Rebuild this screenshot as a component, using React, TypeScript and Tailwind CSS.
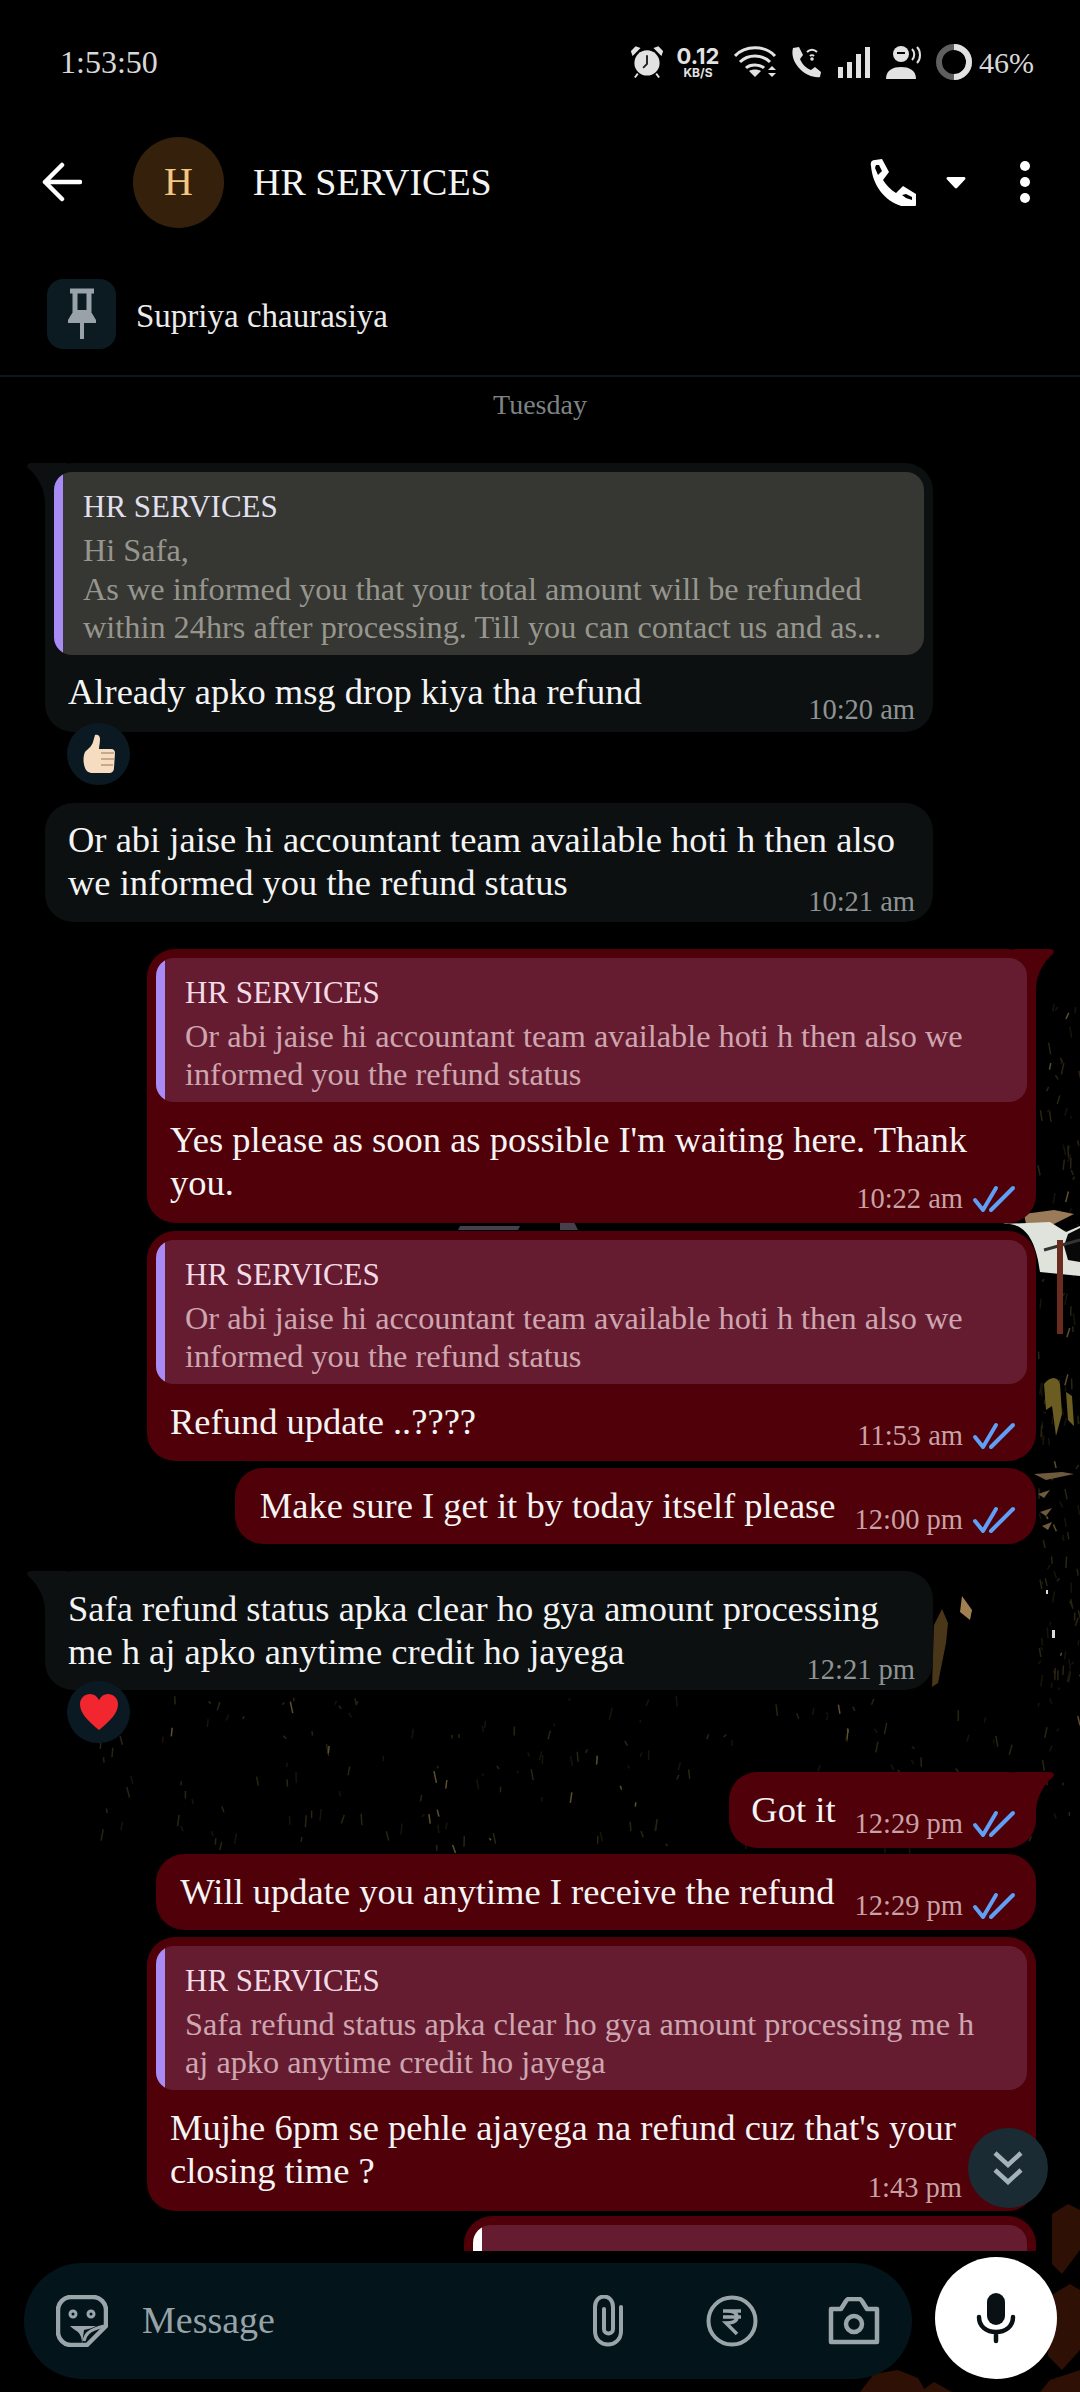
import { ReactNode } from "react";

const serif = "font-['Liberation_Serif',serif]";

const Ticks = () => (
  <svg width="44" height="28" viewBox="0 0 44 28" fill="none" stroke="#5f9ff5" strokeWidth="4" strokeLinecap="round" strokeLinejoin="round">
    <path d="M3 15l8 10L24 3" />
    <path d="M19 25L41 3" />
  </svg>
);

const Quote = ({ lines, out = false }: { lines: string[]; out?: boolean }) => (
  <div className={`rounded-[18px] overflow-hidden flex ${out ? "bg-[#661c30]" : "bg-[#363632]"}`}>
    <div className="w-[9px] shrink-0 bg-[#a88bf5]" />
    <div className="pl-[20px] pr-[6px] pt-[15px] pb-[8px]">
      <p className={`text-[31px] leading-[39px] mb-[5px] ${out ? "text-[#f3dbe6]" : "text-[#e2e0ee]"}`}>HR SERVICES</p>
      {lines.map((l) => (
        <p key={l} className={`text-[32.300px] leading-[38.500px] whitespace-nowrap ${out ? "text-[#cda6b0]" : "text-[#96968f]"}`}>
          {l}
        </p>
      ))}
    </div>
  </div>
);

const Meta = ({ time, out = false }: { time: string; out?: boolean }) => (
  <div className="flex items-center gap-[9px] shrink-0">
    <span className={`text-[28.500px] leading-[30px] ${out ? "text-[#c9a2a6]" : "text-[#8f9393]"}`}>{time}</span>
    {out && <Ticks />}
  </div>
);

const TailIn = () => (
  <svg className="absolute -left-[18px] top-0" width="40" height="40" viewBox="0 0 40 40">
    <path d="M18 40C18 26 10 12 1 5C-1 2 1 0 4 0H40V40Z" fill="#0c1011" />
  </svg>
);

const TailOut = () => (
  <svg className="absolute -right-[18px] top-0" width="40" height="40" viewBox="0 0 40 40">
    <path d="M22 40C22 26 30 12 39 5C41 2 39 0 36 0H0V40Z" fill="#4f0008" />
  </svg>
);

const Reaction = ({ children }: { children: ReactNode }) => (
  <div className="relative z-10 -mt-[9px] ml-[67px] w-[63px] h-[62px] shrink-0 rounded-full bg-[#0b1a22] flex items-center justify-center">
    {children}
  </div>
);

const Incoming = ({ children, tail = false }: { children: ReactNode; tail?: boolean }) => (
  <div className="relative shrink-0 ml-[45px] w-[888px] bg-[#0c1011] rounded-[28px]">
    {tail && <TailIn />}
    <div className="relative">{children}</div>
  </div>
);

const Outgoing = ({ children, tail = false, width }: { children: ReactNode; tail?: boolean; width: string }) => (
  <div className={`relative shrink-0 self-end mr-[44px] bg-[#4f0008] rounded-[28px] ${width}`}>
    {tail && <TailOut />}
    <div className="relative">{children}</div>
  </div>
);

// faint speckles of the wallpaper
const specks: { x: number; y: number; dx: number; dy: number; c: string }[] = [];
let seed = 17;
const rnd = () => {
  seed = (seed * 16807) % 2147483647;
  return seed / 2147483647;
};
for (let i = 0; i < 320; i++) {
  const inStrip = i < 130;
  specks.push({
    x: inStrip ? 1038 + rnd() * 42 : 100 + rnd() * 1000,
    y: inStrip ? 1000 + rnd() * 700 : 1695 + rnd() * 150,
    dx: (rnd() - 0.5) * 6,
    dy: 2 + rnd() * 10,
    c: rnd() > 0.9 ? "#5c4f2e" : rnd() > 0.5 ? "#2a2412" : "#17140a",
  });
}

const Wallpaper = () => (
  <svg className="absolute inset-0" width="1080" height="2392" viewBox="0 0 1080 2392">
    {specks.map((s, i) => (
      <path key={i} d={`M${s.x} ${s.y}l${s.dx} ${s.dy}`} stroke={s.c} strokeWidth="1.500" />
    ))}
    <path d="M1024 1214l30-4 20 4-24 12-24-2Z" fill="#9a7a58" />
    <path d="M1003 1224C1025 1222 1036 1240 1040 1272L1080 1276V1226L1066 1232 1050 1222Z" fill="#dfe3dc" />
    <path d="M1068 1234l12-6v34l-12-2-4-14Z" fill="#080808" />
    <path d="M1044 1250l36-10" stroke="#333" strokeWidth="3" />
    <path d="M1060 1240v94" stroke="#6b2c20" strokeWidth="6" />
    <path d="M1044 1384c6-8 14-8 16 0l2 30-6 22-4-30-6 4ZM1066 1392l6 4 2 30-6-6Z" fill="#6b5c22" />
    <path d="M1034 1474l28-2 12 2-28 6ZM1038 1494l12-4-6 8ZM1040 1512l12-4-6 8ZM1042 1526l10-4-4 8Z" fill="#6e5a3c" />
    <path d="M934 1625l8-16 6 14-2 20-8 40-6 4Z" fill="#4a3618" />
    <path d="M962 1596l10 14-2 10-10-8Z" fill="#a08050" />
    <path d="M1052 1630h3v8h-3ZM1046 1590h2v4h-2Z" fill="#ddd" />
    <path d="M1052 2214l16-10 12 6v40l-18 24-10-10ZM1050 2296l20-12 10 6v60l-18 20-14-14ZM860 2392l14-18 24-4 20 8 8 14ZM920 2392l14-10 18 10ZM1040 2392l10-12 30-10v22Z" fill="#2e1005" />
    <path d="M460 1226h60l-2 4h-60ZM560 1222h14l4 8h-18Z" fill="#44404c" />
  </svg>
);

export default function App() {
  return (
    <div className={`${serif} relative w-[1080px] h-[2392px] bg-black text-[#f4f4f4] overflow-hidden`}>
      <Wallpaper />

      {/* status bar */}
      <div className="relative h-[124px] flex items-center justify-between pl-[60px] pr-[46px]">
        <span className="text-[32px] text-[#d8d8d8]">1:53:50</span>
        <div className="flex items-center text-[#e2e2e2]">
          <svg width="32" height="34" viewBox="0 0 33 34" fill="#e2e2e2">
            <circle cx="16.5" cy="18" r="13" />
            <path d="M16.500 10v9l-4 4" stroke="#222" strokeWidth="2" fill="none" />
            <path d="M2 9l6-6-3-1-4 4ZM31 9l-6-6 3-1 4 4ZM7 29l-3 4M26 29l3 4" stroke="#e2e2e2" strokeWidth="2" />
          </svg>
          <div className="ml-[13px] w-[44px] flex flex-col items-center font-['Inter',sans-serif] font-bold">
            <span className="text-[22px] leading-[21px]">0.12</span>
            <span className="text-[12px] leading-[12px]">KB/S</span>
          </div>
          <svg className="ml-[14px]" width="44" height="32" viewBox="0 0 44 32" fill="none" stroke="#e2e2e2" strokeWidth="3">
            <path d="M1 10C11-1 31-1 41 10M6 16c8-8 22-8 30 0M12 22c4-4 14-4 18 0" />
            <path d="M21 31l-6-6c3-2 9-2 12 0Z" fill="#e2e2e2" stroke="none" />
            <path d="M38 20l4 4h-8ZM38 31l4-4h-8Z" fill="#e2e2e2" stroke="none" />
          </svg>
          <svg className="ml-[13px]" width="30" height="32" viewBox="0 0 30 32" fill="none">
            <path d="M2 2l6-1 4 8-3 4c2 5 6 9 11 11l4-3 6 5-1 5C15 33-2 17 2 2Z" fill="#e2e2e2" />
            <path d="M16 6c3-3 7-3 10 0M19 10c1-1 3-1 4 0" stroke="#e2e2e2" strokeWidth="2" />
            <circle cx="21" cy="13" r="1.800" fill="#e2e2e2" />
          </svg>
          <div className="ml-[17px] flex items-end gap-[4px] h-[31px]">
            <div className="w-[5px] h-[11px] bg-[#e2e2e2]" />
            <div className="w-[5px] h-[16px] bg-[#e2e2e2]" />
            <div className="w-[5px] h-[24px] bg-[#e2e2e2]" />
            <div className="w-[5px] h-[31px] bg-[#e2e2e2]" />
          </div>
          <svg className="ml-[16px]" width="36" height="33" viewBox="0 0 36 33" fill="#e2e2e2">
            <ellipse cx="15" cy="8" rx="8" ry="8" />
            <path d="M11 7h8" stroke="#000" strokeWidth="2" />
            <path d="M0 33c0-9 7-12 15-12s15 3 15 12Z" />
            <path d="M26 3c3 3 3 8 0 11M31 1c4 4 4 12 0 16" stroke="#e2e2e2" strokeWidth="2" fill="none" />
          </svg>
          <svg className="ml-[14px]" width="36" height="36" viewBox="0 0 36 36" fill="none" strokeWidth="6">
            <circle cx="18" cy="18" r="15" stroke="#5f5f5f" />
            <path d="M18 3a15 15 0 0 1 0 30" stroke="#e2e2e2" />
          </svg>
          <span className="ml-[7px] text-[30px] text-[#d8d8d8]">46%</span>
        </div>
      </div>

      {/* header */}
      <div className="relative h-[116px] flex items-center pl-[42px] pr-[50px]">
        <svg width="40" height="40" viewBox="0 0 40 40" fill="none" stroke="#fff" strokeWidth="4.500" strokeLinecap="round" strokeLinejoin="round">
          <path d="M20 3L3 20l17 17M3 20h35" />
        </svg>
        <div className="ml-[51px] w-[91px] h-[91px] rounded-full bg-[#35200c] flex items-center justify-center text-[40px] text-[#f4c77f]">
          H
        </div>
        <span className="ml-[29px] text-[38px] text-[#f4f4f4]">HR SERVICES</span>
        <div className="ml-auto flex items-center">
          <svg width="47" height="47" viewBox="0 0 47 47" fill="#fff" fillRule="evenodd">
            <path d="M2 7C1 3 3 1 6 1l7-1 7 13-6 8c3 5 8 10 13 13l7-7 13 8v10c0 3-2 4-5 4C20 47 4 30 2 7ZM7 6l-1 3 3 7 4-4-3-6ZM33 36l4 3 6 2v-3l-6-3Z" />
          </svg>
          <svg className="ml-[30px]" width="20" height="13" viewBox="0 0 20 13" fill="#fff">
            <path d="M2 1h16c1.500 0 2 1.500 1 2.500L11 12c-.6.6-1.400.6-2 0L1 3.500C0 2.500.500 1 2 1Z" />
          </svg>
          <div className="ml-[54px] flex flex-col gap-[6px]">
            <div className="w-[10px] h-[10px] rounded-full bg-white" />
            <div className="w-[10px] h-[10px] rounded-full bg-white" />
            <div className="w-[10px] h-[10px] rounded-full bg-white" />
          </div>
        </div>
      </div>

      {/* pinned message */}
      <div className="relative mt-[39px] h-[98px] flex items-start pl-[47px] border-b-2 border-[#0e161d]">
        <div className="w-[69px] h-[70px] rounded-[16px] bg-[#0c1a22] flex items-center justify-center">
          <svg width="30" height="52" viewBox="0 0 30 52" fill="none" stroke="#98a2a8" strokeWidth="5">
            <path d="M3 3h24M8 3v21M22 3v21" />
            <path d="M7 22h16l6 10v3H1v-3Z" fill="#98a2a8" stroke="none" />
            <path d="M15 35v16" strokeWidth="4" />
          </svg>
        </div>
        <span className="ml-[20px] mt-[17px] text-[33px] leading-[40px] text-[#ececec]">Supriya chaurasiya</span>
      </div>

      <div className="relative text-center text-[28px] leading-[32px] mt-[12px] text-[#7d8285]">Tuesday</div>

      {/* messages */}
      <div className="relative h-[1831px] mt-[-1px] pt-[43px] flex flex-col overflow-hidden">
        <Incoming tail>
          <div className="p-[9px] pb-0">
            <Quote
              lines={[
                "Hi Safa,",
                "As we informed you that your total amount will be refunded",
                "within 24hrs after processing. Till you can contact us and as...",
              ]}
            />
          </div>
          <p className="pl-[23px] pt-[15px] text-[36.500px] leading-[43px]">Already apko msg drop kiya tha refund</p>
          <div className="flex justify-end pr-[18px] -mt-[18px] pb-[7px]">
            <Meta time="10:20 am" />
          </div>
        </Incoming>
        <Reaction>
          <svg width="36" height="40" viewBox="0 0 36 40">
            <path d="M14 1c3-1 5 1 5 4 0 4-1 7-1 10h12c3 0 4 2 4 4l-1 15c0 3-2 5-5 5H12c-4 0-7-2-8-5-2-5-2-12 0-16 3-3 7-6 8-10Z" fill="#f6dcc0" />
            <path d="M20 19h13M20 25h13M20 31h12" stroke="#c9a98c" strokeWidth="2" />
          </svg>
        </Reaction>

        <div className="h-[18px] shrink-0" />
        <Incoming>
          <p className="pl-[23px] pt-[15px] text-[36.500px] leading-[43px]">
            Or abi jaise hi accountant team available hoti h then also
            <br />
            we informed you the refund status
          </p>
          <div className="flex justify-end pr-[18px] -mt-[17px] pb-[5px]">
            <Meta time="10:21 am" />
          </div>
        </Incoming>

        <div className="h-[27px] shrink-0" />
        <Outgoing tail width="w-[889px]">
          <div className="p-[9px] pb-0">
            <Quote
              out
              lines={["Or abi jaise hi accountant team available hoti h then also we", "informed you the refund status"]}
            />
          </div>
          <p className="pl-[23px] pt-[16px] text-[36.500px] leading-[43px]">
            Yes please as soon as possible I'm waiting here. Thank
            <br />
            you.
          </p>
          <div className="flex justify-end pr-[20px] -mt-[20px] pb-[9px]">
            <Meta time="10:22 am" out />
          </div>
        </Outgoing>

        <div className="h-[8px] shrink-0" />
        <Outgoing width="w-[889px]">
          <div className="p-[9px] pb-0">
            <Quote
              out
              lines={["Or abi jaise hi accountant team available hoti h then also we", "informed you the refund status"]}
            />
          </div>
          <p className="pl-[23px] pt-[16px] text-[36.500px] leading-[43px]">Refund update ..????</p>
          <div className="flex justify-end pr-[20px] -mt-[22px] pb-[10px]">
            <Meta time="11:53 am" out />
          </div>
        </Outgoing>

        <div className="h-[7px] shrink-0" />
        <Outgoing width="w-fit">
          <div className="flex items-end pl-[25px] pr-[20px] pt-[16px] pb-[9px] gap-[19px]">
            <p className="text-[36.500px] leading-[43px] pb-[8px] whitespace-nowrap">Make sure I get it by today itself please</p>
            <Meta time="12:00 pm" out />
          </div>
        </Outgoing>

        <div className="h-[27px] shrink-0" />
        <Incoming tail>
          <p className="pl-[23px] pt-[16px] text-[36.500px] leading-[43px]">
            Safa refund status apka clear ho gya amount processing
            <br />
            me h aj apko anytime credit ho jayega
          </p>
          <div className="flex justify-end pr-[18px] -mt-[18px] pb-[5px]">
            <Meta time="12:21 pm" />
          </div>
        </Incoming>
        <Reaction>
          <svg width="40" height="38" viewBox="0 0 40 38">
            <path d="M20 37C8 27 1 20 1 11 1 5 6 1 11 1c4 0 7 2 9 6 2-4 5-6 9-6 5 0 10 4 10 10 0 9-7 16-19 26Z" fill="#f2262e" />
          </svg>
        </Reaction>

        <div className="h-[29px] shrink-0" />
        <Outgoing tail width="w-fit">
          <div className="flex items-end pl-[22px] pr-[20px] pt-[16px] pb-[9px] gap-[19px]">
            <p className="text-[36.500px] leading-[43px] pb-[8px] whitespace-nowrap">Got it</p>
            <Meta time="12:29 pm" out />
          </div>
        </Outgoing>

        <div className="h-[6px] shrink-0" />
        <Outgoing width="w-fit">
          <div className="flex items-end pl-[24px] pr-[20px] pt-[16px] pb-[9px] gap-[20px]">
            <p className="text-[36.500px] leading-[43px] pb-[8px] whitespace-nowrap">Will update you anytime I receive the refund</p>
            <Meta time="12:29 pm" out />
          </div>
        </Outgoing>

        <div className="h-[7px] shrink-0" />
        <Outgoing width="w-[889px]">
          <div className="p-[9px] pb-0">
            <Quote
              out
              lines={["Safa refund status apka clear ho gya amount processing me h", "aj apko anytime credit ho jayega"]}
            />
          </div>
          <p className="pl-[23px] pt-[16px] text-[36.500px] leading-[43px]">
            Mujhe 6pm se pehle ajayega na refund cuz that's your
            <br />
            closing time ?
          </p>
          <div className="flex justify-end pr-[74px] -mt-[19px] pb-[8px]">
            <span className="text-[28.500px] leading-[30px] text-[#c9a2a6]">1:43 pm</span>
          </div>
        </Outgoing>

        <div className="h-[5px] shrink-0" />
        <Outgoing width="w-[572px]">
          <div className="p-[9px] pb-0">
            <div className="rounded-[18px] overflow-hidden flex h-[80px] bg-[#661c30]">
              <div className="w-[9px] bg-white" />
            </div>
          </div>
        </Outgoing>
      </div>

      {/* scroll to bottom */}
      <div className="absolute left-[968px] top-[2128px] w-[80px] h-[80px] rounded-full bg-[#1a2b33] flex items-center justify-center">
        <svg width="30" height="34" viewBox="0 0 30 34" fill="none" stroke="#a5b2b8" strokeWidth="4.500">
          <path d="M2 2l13 12L28 2M2 19l13 12 13-12" />
        </svg>
      </div>

      {/* composer */}
      <div className="absolute left-[24px] right-[23px] top-[2257px] flex items-center gap-[23px]">
        <div className="mt-[5px] w-[888px] h-[116px] rounded-[58px] bg-[#03141b] flex items-center pl-[32px] pr-[32px]">
          <svg width="52" height="52" viewBox="0 0 52 52" fill="none" stroke="#9aa5aa" strokeWidth="4.500" strokeLinejoin="round">
            <path d="M15 2h22c7 0 13 6 13 13v16L31 50H15C8 50 2 44 2 37V15C2 8 8 2 15 2Z" />
            <circle cx="17" cy="19" r="3" strokeWidth="3" />
            <circle cx="35" cy="19" r="3" strokeWidth="3" />
            <path d="M14 31h26c-3 2-8 3-12 4l-2 14c0-5-1-9-4-12-3-2-6-4-8-6Z" fill="#9aa5aa" stroke="none" />
            <path d="M28 46c1-6 4-11 20-15" strokeWidth="3" />
          </svg>
          <span className="ml-[34px] text-[38px] text-[#98a3a8]">Message</span>
          <svg className="ml-auto" width="32" height="52" viewBox="0 0 32 52" fill="none" stroke="#9aa5aa" strokeWidth="4" strokeLinecap="round">
            <path d="M29 12V36C29 54 3 54 3 36V12C3-2 21-2 21 12V34C21 40 12 40 12 34V14" />
          </svg>
          <svg className="ml-[82px]" width="52" height="52" viewBox="0 0 52 52" fill="none" stroke="#9aa5aa" strokeWidth="4">
            <circle cx="26" cy="26" r="23.500" />
            <path d="M17 16h18M17 22h18M21 16c7 0 10 2 10 6s-4 6-11 6l11 11" strokeWidth="3.500" />
          </svg>
          <svg className="ml-[70px]" width="52" height="48" viewBox="0 0 52 48" fill="none" stroke="#9aa5aa" strokeWidth="4.500" strokeLinejoin="round">
            <path d="M3 12h10l5-8c1-1 1-2 3-2h10c2 0 2 1 3 2l5 8h10v33H3Z" />
            <circle cx="26" cy="27" r="8" />
          </svg>
        </div>
        <div className="w-[122px] h-[122px] rounded-full bg-white flex items-center justify-center">
          <svg width="40" height="52" viewBox="0 0 40 52" fill="none">
            <rect x="11" y="1" width="18" height="32" rx="9" fill="#0a1114" />
            <path d="M3 25c0 10 8 15 17 15s17-5 17-15M20 40v9" stroke="#0a1114" strokeWidth="4.500" strokeLinecap="round" />
          </svg>
        </div>
      </div>
    </div>
  );
}
